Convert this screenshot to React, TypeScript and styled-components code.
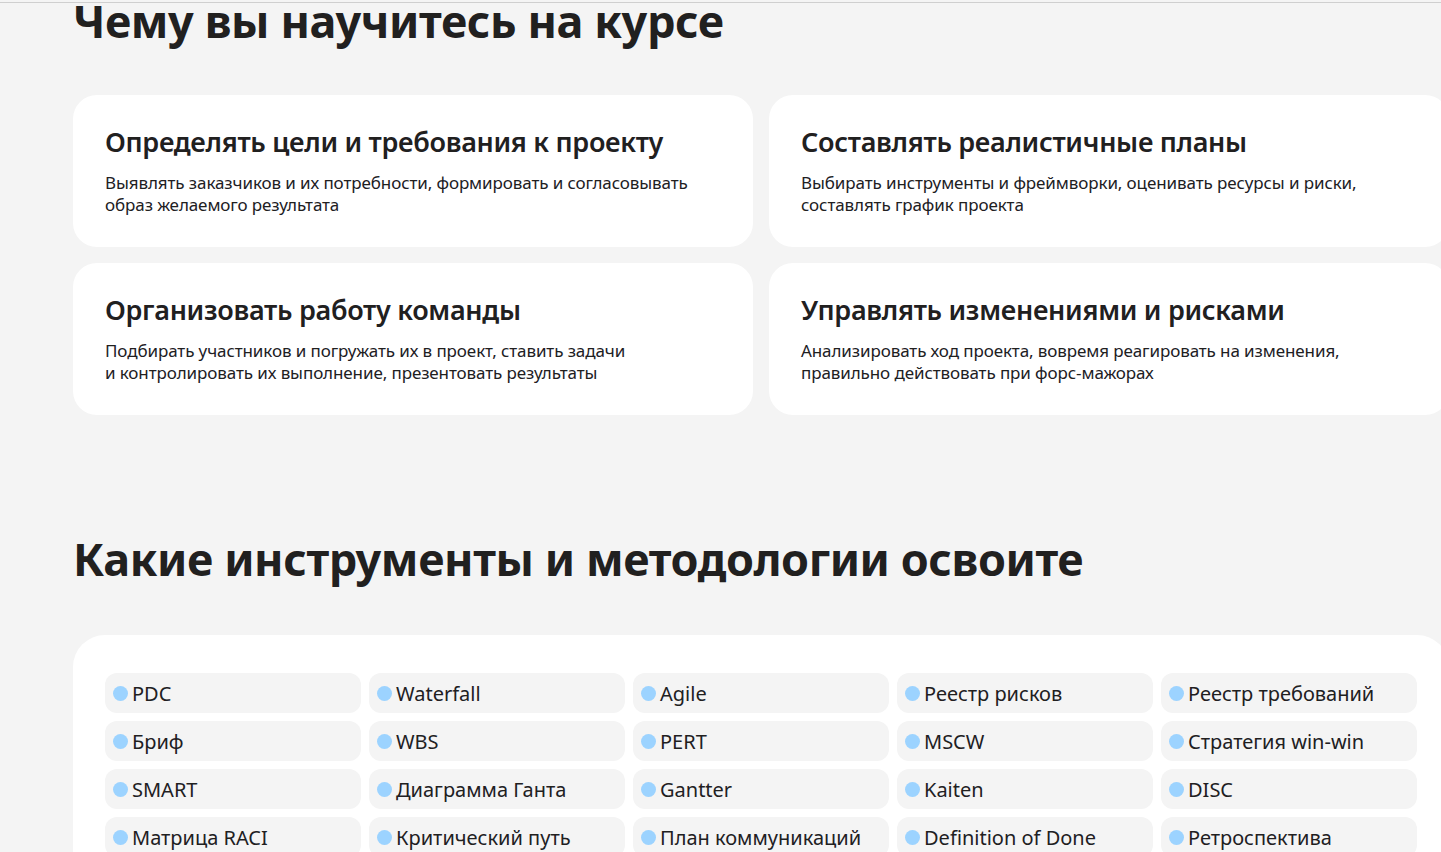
import React from "react";
import styled, { createGlobalStyle } from "styled-components";

const Global = createGlobalStyle`
  html, body { margin: 0; padding: 0; background: #f4f4f4; overflow: hidden; }
  body { font-family: "Noto Sans", "Open Sans", sans-serif; color: #21201f; }
`;

const Page = styled.div`
  border-top: 1px solid #cfcfcf;
  margin-top: 2px;
  padding-left: 73px;
  width: 1376px;
`;

const H = styled.h2<{ $top: number }>`
  font-size: 45px;
  font-weight: 700;
  line-height: 56px;
  margin: ${(p) => p.$top}px 0 0;
  letter-spacing: -0.4px;
`;

const Grid = styled.div`
  display: grid;
  grid-template-columns: 680px 680px;
  gap: 16px;
  margin-top: 46px;
`;

const Card = styled.div`
  background: #fff;
  border-radius: 24px;
  height: 152px;
  box-sizing: border-box;
  padding: 30px 32px;
`;

const Title = styled.div`
  font-size: 27px;
  font-weight: 600;
  line-height: 34px;
  letter-spacing: -0.3px;
`;

const Desc = styled.div`
  font-size: 17px;
  line-height: 22px;
  margin-top: 13px;
  letter-spacing: -0.1px;
`;

const Tools = styled.div`
  margin-top: 48px;
  background: #fff;
  border-radius: 32px;
  padding: 38px 32px;
`;

const Chips = styled.div`
  display: grid;
  grid-template-columns: repeat(5, 256px);
  gap: 8px;
`;

const Chip = styled.div`
  height: 40px;
  background: #f4f4f4;
  border-radius: 12px;
  display: flex;
  align-items: center;
  padding-left: 8px;
  gap: 4px;
  font-size: 20px;
`;

const Dot = styled.span`
  width: 15px;
  height: 15px;
  border-radius: 50%;
  background: #9cd3ff;
`;

const cards = [
  ["Определять цели и требования к проекту", "Выявлять заказчиков и их потребности, формировать и согласовывать", "образ желаемого результата"],
  ["Составлять реалистичные планы", "Выбирать инструменты и фреймворки, оценивать ресурсы и риски,", "составлять график проекта"],
  ["Организовать работу команды", "Подбирать участников и погружать их в проект, ставить задачи", "и контролировать их выполнение, презентовать результаты"],
  ["Управлять изменениями и рисками", "Анализировать ход проекта, вовремя реагировать на изменения,", "правильно действовать при форс-мажорах"],
];

const tools = [
  "PDC", "Waterfall", "Agile", "Реестр рисков", "Реестр требований",
  "Бриф", "WBS", "PERT", "MSCW", "Стратегия win-win",
  "SMART", "Диаграмма Ганта", "Gantter", "Kaiten", "DISC",
  "Матрица RACI", "Критический путь", "План коммуникаций", "Definition of Done", "Ретроспектива",
];

export default function App() {
  return (
    <>
      <Global />
      <Page>
        <H $top={-10}>Чему вы научитесь на курсе</H>
        <Grid>
          {cards.map(([t, a, b]) => (
            <Card key={t}>
              <Title>{t}</Title>
              <Desc>{a}<br />{b}</Desc>
            </Card>
          ))}
        </Grid>
        <H $top={116}>Какие инструменты и методологии освоите</H>
        <Tools>
          <Chips>
            {tools.map((t) => (
              <Chip key={t}><Dot />{t}</Chip>
            ))}
          </Chips>
        </Tools>
      </Page>
    </>
  );
}
